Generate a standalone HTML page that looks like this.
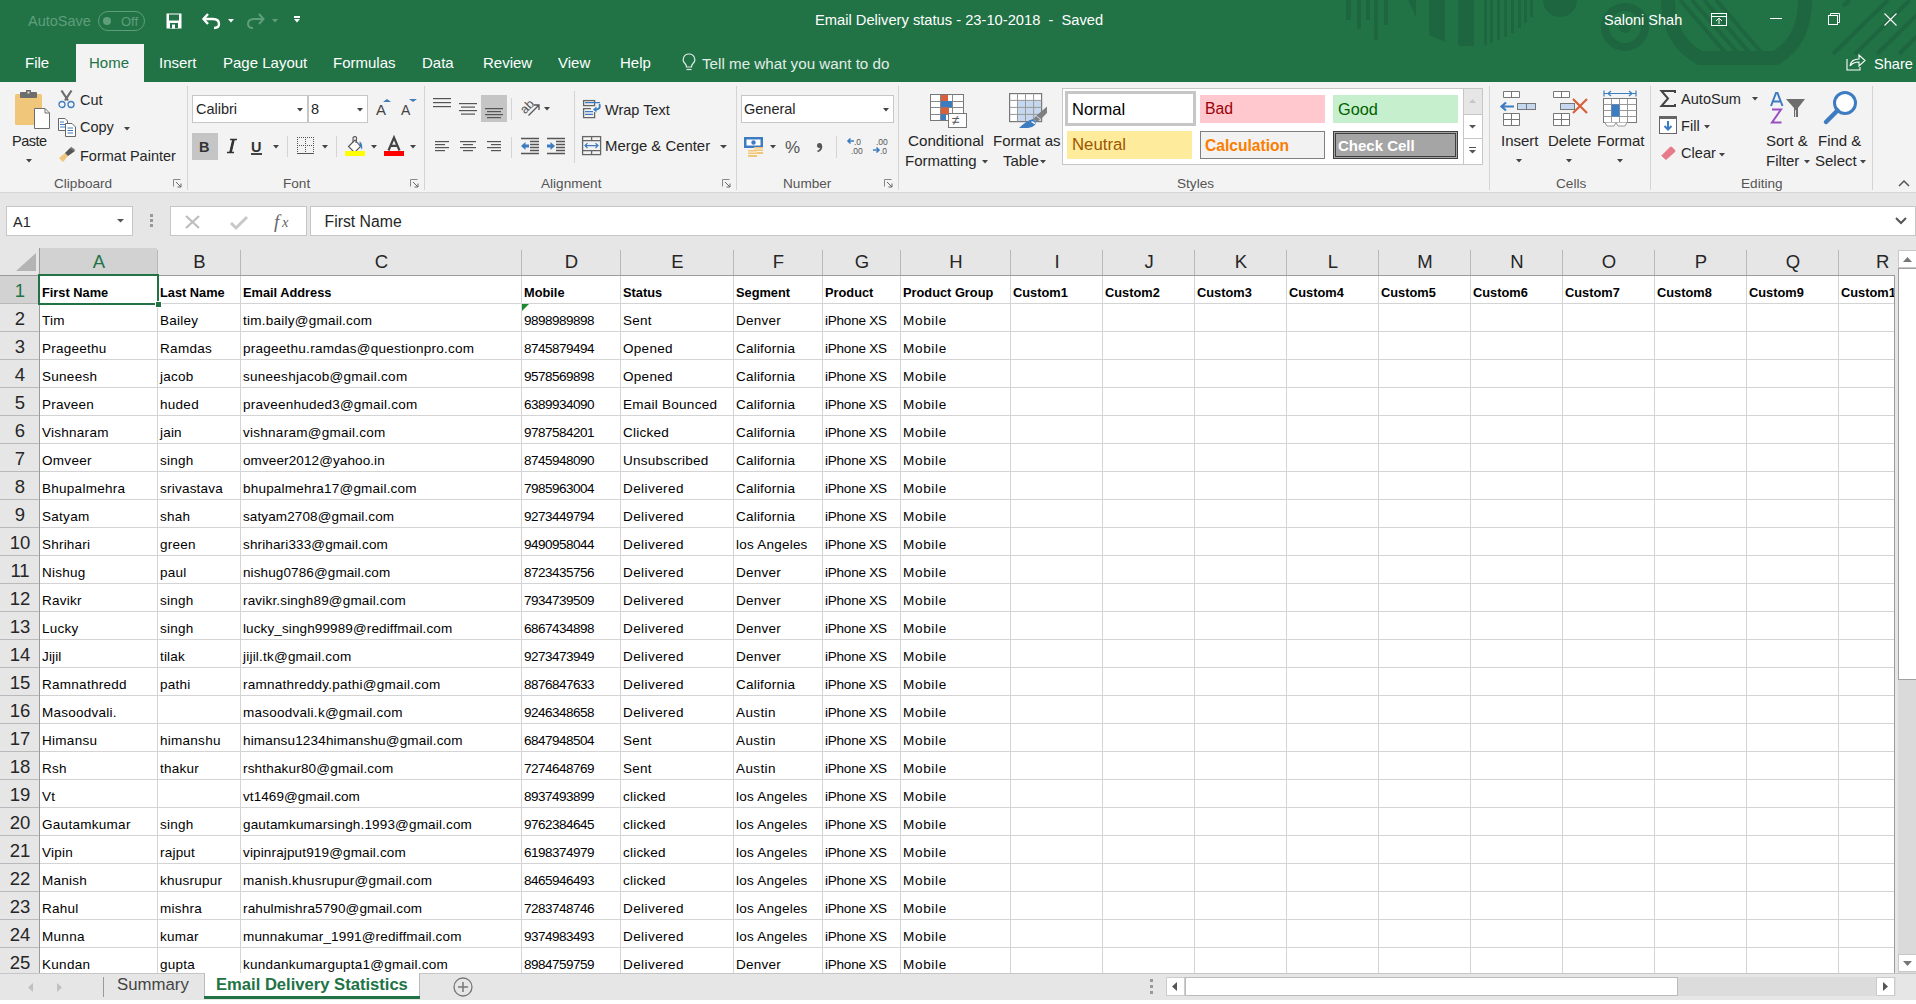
<!DOCTYPE html>
<html><head><meta charset="utf-8"><title>Excel</title>
<style>
html,body{margin:0;padding:0;}
body{width:1916px;height:1004px;position:relative;overflow:hidden;background:#fff;font-family:"Liberation Sans", sans-serif;}
.a{position:absolute;}
.t{position:absolute;white-space:pre;line-height:1;font-family:"Liberation Sans", sans-serif;}
svg.a{overflow:visible;}
</style></head><body>
<div class="a" style="left:0px;top:0px;width:1916px;height:82px;background:#217346"></div><svg class="a" style="left:0px;top:0px;overflow:hidden" width="1916" height="82" viewBox="0 0 1916 82"><g fill="#1e663f"><rect x="1346" y="0" width="5" height="20"/><rect x="1357" y="0" width="4" height="29"/><rect x="1366" y="0" width="4" height="20"/><rect x="1374" y="0" width="4" height="40"/><rect x="1384" y="0" width="4" height="25"/><path d="M1408 0H1416V17Z"/><path d="M1429 0H1445V42L1429 35Z"/><path d="M1458 0H1474V46H1465Q1458 46 1458 44Z"/><rect x="1484" y="0" width="3" height="45"/><rect x="1490" y="0" width="3" height="43"/><rect x="1497" y="0" width="3" height="40"/><rect x="1504" y="0" width="3" height="37"/><rect x="1511" y="0" width="3" height="33"/><rect x="1518" y="0" width="3" height="28"/><rect x="1524" y="0" width="3" height="23"/><rect x="1530" y="0" width="3" height="17"/><circle cx="1560" cy="0" r="17"/><circle cx="1625" cy="27" r="20" fill="none" stroke="#1e663f" stroke-width="8"/><circle cx="1625" cy="27" r="6"/><path d="M1668 0 Q1668 40 1700 58 L1776 58 Q1805 40 1805 0" fill="none" stroke="#1e663f" stroke-width="14"/><path d="M1680 0 L1730 58" stroke="#1e663f" stroke-width="4" fill="none"/><path d="M1692 0 L1742 58" stroke="#1e663f" stroke-width="4" fill="none"/><path d="M1704 0 L1754 58" stroke="#1e663f" stroke-width="4" fill="none"/><path d="M1716 0 L1766 58" stroke="#1e663f" stroke-width="4" fill="none"/><path d="M1888 0 L1833 54" stroke="#1e663f" stroke-width="4" fill="none"/><path d="M1910 0 L1855 54" stroke="#1e663f" stroke-width="4" fill="none"/><path d="M1932 0 L1877 54" stroke="#1e663f" stroke-width="4" fill="none"/><path d="M1954 0 L1899 54" stroke="#1e663f" stroke-width="4" fill="none"/><path d="M1843 6 L1850 0" stroke="#1e663f" stroke-width="4" fill="none"/></g></svg><div class="t" style="left:28px;top:14.2px;font-size:14.5px;color:#5f9e7a;font-weight:400;">AutoSave</div><div class="a" style="left:98px;top:11px;width:47px;height:20px;border:1px solid #5f9e7a;border-radius:10px;box-sizing:border-box"></div><div class="a" style="left:103px;top:17px;width:8px;height:8px;background:#5f9e7a;border-radius:50%"></div><div class="t" style="left:121px;top:15.0px;font-size:13px;color:#5f9e7a;font-weight:400;">Off</div><svg class="a" style="left:166px;top:13px;" width="16" height="16" viewBox="0 0 16 16"><path d="M0.5 0.5H15.5V15.5H0.5Z" fill="#fff"/><rect x="3" y="1.5" width="10" height="6" fill="#217346"/><rect x="4" y="10" width="8" height="5" fill="#217346"/><rect x="6" y="11.5" width="3" height="4" fill="#fff"/></svg><svg class="a" style="left:202px;top:13px;" width="19" height="16" viewBox="0 0 19 16"><path d="M2 6H11Q17 6 17 11Q17 15 12 15" fill="none" stroke="#fff" stroke-width="2.4"/><path d="M6 1L1.5 6L6 11" fill="none" stroke="#fff" stroke-width="2.4"/></svg><svg class="a" style="left:228px;top:19px;" width="6" height="4" viewBox="0 0 6 4"><path d="M0 0H6L3.0 3.5Z" fill="#fff"/></svg><svg class="a" style="left:246px;top:13px;" width="19" height="16" viewBox="0 0 19 16"><path d="M17 6H8Q2 6 2 11Q2 15 7 15" fill="none" stroke="#5f9e7a" stroke-width="2"/><path d="M13 1L17.5 6L13 11" fill="none" stroke="#5f9e7a" stroke-width="2"/></svg><svg class="a" style="left:272px;top:19px;" width="6" height="4" viewBox="0 0 6 4"><path d="M0 0H6L3.0 3.5Z" fill="#5f9e7a"/></svg><div class="a" style="left:294px;top:16px;width:6px;height:1.5px;background:#fff"></div><svg class="a" style="left:294px;top:19px;" width="6" height="4" viewBox="0 0 6 4"><path d="M0 0H6L3.0 3.5Z" fill="#fff"/></svg><div class="t" style="left:815px;top:12.6px;font-size:14.7px;color:#fff;font-weight:400;">Email Delivery status - 23-10-2018  -  Saved</div><div class="t" style="left:1604px;top:12.7px;font-size:14.5px;color:#fff;font-weight:400;">Saloni Shah</div><svg class="a" style="left:1711px;top:13px;" width="16" height="13" viewBox="0 0 16 13"><rect x="0.5" y="0.5" width="15" height="12" fill="none" stroke="#fff"/><path d="M0.5 3.5H15.5" stroke="#fff"/><path d="M8 11V5M5 8L8 5L11 8" fill="none" stroke="#fff"/></svg><div class="a" style="left:1770px;top:18px;width:12px;height:1px;background:#fff"></div><svg class="a" style="left:1828px;top:13px;" width="12" height="12" viewBox="0 0 12 12"><rect x="0.5" y="2.5" width="9" height="9" fill="none" stroke="#fff"/><path d="M2.5 2.5V0.5H11.5V9.5H9.5" fill="none" stroke="#fff"/></svg><svg class="a" style="left:1884px;top:13px;" width="13" height="13" viewBox="0 0 13 13"><path d="M0.5 0.5L12.5 12.5M12.5 0.5L0.5 12.5" stroke="#fff" stroke-width="1.1"/></svg><div class="a" style="left:76px;top:44px;width:68px;height:38px;background:#f3f3f3"></div><div class="t" style="left:25px;top:55.1px;font-size:15px;color:#fff;font-weight:400;">File</div><div class="t" style="left:89px;top:55.1px;font-size:15px;color:#217346;font-weight:400;">Home</div><div class="t" style="left:159px;top:55.1px;font-size:15px;color:#fff;font-weight:400;">Insert</div><div class="t" style="left:223px;top:55.1px;font-size:15px;color:#fff;font-weight:400;">Page Layout</div><div class="t" style="left:333px;top:55.1px;font-size:15px;color:#fff;font-weight:400;">Formulas</div><div class="t" style="left:422px;top:55.1px;font-size:15px;color:#fff;font-weight:400;">Data</div><div class="t" style="left:483px;top:55.1px;font-size:15px;color:#fff;font-weight:400;">Review</div><div class="t" style="left:558px;top:55.1px;font-size:15px;color:#fff;font-weight:400;">View</div><div class="t" style="left:620px;top:55.1px;font-size:15px;color:#fff;font-weight:400;">Help</div><svg class="a" style="left:682px;top:53px;" width="14" height="20" viewBox="0 0 14 20"><path d="M7 1A5.5 5.5 0 0 0 3 10.5Q4.5 12 4.5 14H9.5Q9.5 12 11 10.5A5.5 5.5 0 0 0 7 1Z" fill="none" stroke="#e0ece5" stroke-width="1.2"/><path d="M4.5 16.5H9.5" stroke="#e0ece5" stroke-width="1.2"/></svg><div class="t" style="left:702px;top:56.1px;font-size:15.2px;color:#e0ece5;font-weight:400;">Tell me what you want to do</div><svg class="a" style="left:1846px;top:53px;" width="20" height="18" viewBox="0 0 20 18"><path d="M1 6V17H14V14" fill="none" stroke="#fff" stroke-width="1.1"/><path d="M4 13Q5 6 13 6V2L19 7.5L13 13V9Q7 9 4 13Z" fill="none" stroke="#fff" stroke-width="1.1"/></svg><div class="t" style="left:1874px;top:56.6px;font-size:14.6px;color:#fff;font-weight:400;">Share</div><div class="a" style="left:0px;top:82px;width:1916px;height:111px;background:#f3f3f3"></div><div class="a" style="left:0px;top:192px;width:1916px;height:1px;background:#d6d6d6"></div><svg class="a" style="left:15px;top:90px;" width="35" height="39" viewBox="0 0 35 39"><rect x="0" y="4" width="27" height="31" rx="1.5" fill="#f0c67a"/><rect x="5" y="2" width="17" height="6" rx="1" fill="#6d6d6d"/><rect x="11" y="0" width="5" height="4" fill="#6d6d6d"/><rect x="12.5" y="1.5" width="2" height="2" fill="#ddd"/><path d="M19.5 18.5H30L34.5 23V38.5H19.5Z" fill="#fff" stroke="#6d6d6d"/><path d="M30 18.5V23H34.5" fill="none" stroke="#6d6d6d"/></svg><div class="t" style="left:12px;top:133.7px;font-size:14.5px;color:#262626;font-weight:400;letter-spacing:-0.5px">Paste</div><svg class="a" style="left:26px;top:159px;" width="6" height="4" viewBox="0 0 6 4"><path d="M0 0H6L3.0 3.5Z" fill="#444"/></svg><svg class="a" style="left:58px;top:90px;" width="17" height="19" viewBox="0 0 17 19"><path d="M3.5 0.5L10 10.5M13.5 0.5L7 10.5" stroke="#6d6d6d" stroke-width="2.2"/><circle cx="4" cy="14.5" r="3" fill="none" stroke="#3e7cc1" stroke-width="1.3"/><circle cx="13" cy="14.5" r="3" fill="none" stroke="#3e7cc1" stroke-width="1.3"/></svg><div class="t" style="left:80px;top:92.7px;font-size:14.5px;color:#262626;font-weight:400;">Cut</div><svg class="a" style="left:58px;top:118px;" width="18" height="19" viewBox="0 0 18 19"><path d="M0.5 0.5H7L9.5 3V12.5H0.5Z" fill="#fff" stroke="#666"/><path d="M2 4H6M2 6.5H7M2 9H7" stroke="#3e7cc1"/><path d="M7.5 5.5H14L17.5 9V18.5H7.5Z" fill="#fff" stroke="#666"/><path d="M9.5 10H15M9.5 12.5H15M9.5 15H15" stroke="#3e7cc1"/></svg><div class="t" style="left:80px;top:119.7px;font-size:14.5px;color:#262626;font-weight:400;">Copy</div><svg class="a" style="left:124px;top:127px;" width="6" height="4" viewBox="0 0 6 4"><path d="M0 0H6L3.0 3.5Z" fill="#444"/></svg><svg class="a" style="left:58px;top:147px;" width="18" height="16" viewBox="0 0 18 16"><path d="M1 11L7 6L10 9L5 15Z" fill="#f0c67a"/><path d="M7 6L12 1L17 4L10 9Z" fill="#555"/><path d="M12.5 0.5L16.5 3.5" stroke="#777" stroke-width="2"/></svg><div class="t" style="left:80px;top:148.7px;font-size:14.5px;color:#262626;font-weight:400;">Format Painter</div><div class="t" style="left:54px;top:176.5px;font-size:13.6px;color:#555;font-weight:400;">Clipboard</div><svg class="a" style="left:173px;top:179px;" width="9" height="9" viewBox="0 0 9 9"><path d="M0.5 7.5V0.5H7.5" fill="none" stroke="#888"/><path d="M3 3L8 8M8 4.5V8H4.5" fill="none" stroke="#666"/></svg><div class="a" style="left:187px;top:86px;width:1px;height:104px;background:#d4d4d4"></div><div class="a" style="left:192px;top:95px;width:116px;height:28px;background:#fff;border:1px solid #c6c6c6;box-sizing:border-box"></div><div class="a" style="left:308px;top:95px;width:60px;height:28px;background:#fff;border:1px solid #c6c6c6;box-sizing:border-box"></div><div class="t" style="left:196px;top:102.2px;font-size:14.5px;color:#262626;font-weight:400;">Calibri</div><svg class="a" style="left:297px;top:108px;" width="6" height="4" viewBox="0 0 6 4"><path d="M0 0H6L3.0 3.5Z" fill="#444"/></svg><div class="t" style="left:311px;top:102.2px;font-size:14.5px;color:#262626;font-weight:400;">8</div><svg class="a" style="left:357px;top:108px;" width="6" height="4" viewBox="0 0 6 4"><path d="M0 0H6L3.0 3.5Z" fill="#444"/></svg><div class="t" style="left:376px;top:102.3px;font-size:15px;color:#444;font-weight:400;">A</div><svg class="a" style="left:383px;top:99px;" width="8" height="3" viewBox="0 0 8 3"><path d="M0 3L4 0L8 3Z" fill="#3e7cc1"/></svg><div class="t" style="left:401px;top:103.1px;font-size:14px;color:#444;font-weight:400;">A</div><svg class="a" style="left:409px;top:99px;" width="8" height="3" viewBox="0 0 8 3"><path d="M0 0H8L4 3Z" fill="#3e7cc1"/></svg><div class="a" style="left:192px;top:133px;width:26px;height:27px;background:#c5c5c5"></div><div class="t" style="left:199px;top:139.7px;font-size:14.5px;color:#333;font-weight:700;">B</div><svg class="a" style="left:226px;top:139px;" width="12" height="14" viewBox="0 0 12 14"><path d="M4 0.5H11M1 13.5H8M7.5 0.5L4.5 13.5" stroke="#333" stroke-width="1.6" fill="none"/><path d="M7.5 0.5L4.5 13.5" stroke="#333" stroke-width="2.6"/></svg><div class="t" style="left:251px;top:139.7px;font-size:14.5px;color:#333;font-weight:700;">U</div><div class="a" style="left:251px;top:153px;width:11px;height:1.5px;background:#444"></div><svg class="a" style="left:273px;top:145px;" width="6" height="4" viewBox="0 0 6 4"><path d="M0 0H6L3.0 3.5Z" fill="#444"/></svg><div class="a" style="left:287px;top:136px;width:1px;height:21px;background:#d4d4d4"></div><svg class="a" style="left:297px;top:137px;" width="18" height="18" viewBox="0 0 18 18"><g fill="#555"><rect x="0" y="0" width="1" height="1"/><rect x="0" y="8" width="1" height="1"/><rect x="0" y="0" width="1" height="1"/><rect x="8" y="0" width="1" height="1"/><rect x="16" y="0" width="1" height="1"/><rect x="2" y="0" width="1" height="1"/><rect x="2" y="8" width="1" height="1"/><rect x="0" y="2" width="1" height="1"/><rect x="8" y="2" width="1" height="1"/><rect x="16" y="2" width="1" height="1"/><rect x="4" y="0" width="1" height="1"/><rect x="4" y="8" width="1" height="1"/><rect x="0" y="4" width="1" height="1"/><rect x="8" y="4" width="1" height="1"/><rect x="16" y="4" width="1" height="1"/><rect x="6" y="0" width="1" height="1"/><rect x="6" y="8" width="1" height="1"/><rect x="0" y="6" width="1" height="1"/><rect x="8" y="6" width="1" height="1"/><rect x="16" y="6" width="1" height="1"/><rect x="8" y="0" width="1" height="1"/><rect x="8" y="8" width="1" height="1"/><rect x="0" y="8" width="1" height="1"/><rect x="8" y="8" width="1" height="1"/><rect x="16" y="8" width="1" height="1"/><rect x="10" y="0" width="1" height="1"/><rect x="10" y="8" width="1" height="1"/><rect x="0" y="10" width="1" height="1"/><rect x="8" y="10" width="1" height="1"/><rect x="16" y="10" width="1" height="1"/><rect x="12" y="0" width="1" height="1"/><rect x="12" y="8" width="1" height="1"/><rect x="0" y="12" width="1" height="1"/><rect x="8" y="12" width="1" height="1"/><rect x="16" y="12" width="1" height="1"/><rect x="14" y="0" width="1" height="1"/><rect x="14" y="8" width="1" height="1"/><rect x="0" y="14" width="1" height="1"/><rect x="8" y="14" width="1" height="1"/><rect x="16" y="14" width="1" height="1"/><rect x="16" y="0" width="1" height="1"/><rect x="16" y="8" width="1" height="1"/></g><rect x="0" y="16" width="17" height="1" fill="#555"/></svg><svg class="a" style="left:322px;top:145px;" width="6" height="4" viewBox="0 0 6 4"><path d="M0 0H6L3.0 3.5Z" fill="#444"/></svg><div class="a" style="left:336px;top:136px;width:1px;height:21px;background:#d4d4d4"></div><svg class="a" style="left:345px;top:136px;" width="21" height="21" viewBox="0 0 21 21"><path d="M3.5 10.5L10 4L15.5 10.5L9.5 16.5Z" fill="#fff" stroke="#555" stroke-width="1.1"/><path d="M8 6.5V2.2Q8 0.6 10 0.6Q12 0.6 11.5 3L11 7" fill="none" stroke="#555" stroke-width="1.1"/><path d="M14.5 5.5Q18 6.5 17 14Q15.5 11 14.5 9Z" fill="#3e7cc1"/><rect x="0" y="15" width="20" height="5" fill="#ffff00"/></svg><svg class="a" style="left:371px;top:145px;" width="6" height="4" viewBox="0 0 6 4"><path d="M0 0H6L3.0 3.5Z" fill="#444"/></svg><svg class="a" style="left:384px;top:136px;" width="20" height="15" viewBox="0 0 20 15"><path d="M4.5 14.5L10 1.5L15.5 14.5M6.8 9.8H13.2" fill="none" stroke="#444" stroke-width="2.2"/></svg><div class="a" style="left:384px;top:151px;width:20px;height:5px;background:#ff0000"></div><svg class="a" style="left:410px;top:145px;" width="6" height="4" viewBox="0 0 6 4"><path d="M0 0H6L3.0 3.5Z" fill="#444"/></svg><div class="t" style="left:283px;top:176.5px;font-size:13.6px;color:#555;font-weight:400;">Font</div><svg class="a" style="left:410px;top:179px;" width="9" height="9" viewBox="0 0 9 9"><path d="M0.5 7.5V0.5H7.5" fill="none" stroke="#888"/><path d="M3 3L8 8M8 4.5V8H4.5" fill="none" stroke="#666"/></svg><div class="a" style="left:424px;top:86px;width:1px;height:104px;background:#d4d4d4"></div><div class="a" style="left:481px;top:95px;width:26px;height:27px;background:#c5c5c5"></div><svg class="a" style="left:0px;top:0px;" width="1916" height="200" viewBox="0 0 1916 200"><rect x="433" y="98" width="18" height="1.2" fill="#555"/><rect x="433" y="102" width="18" height="1.2" fill="#555"/><rect x="433" y="106" width="18" height="1.2" fill="#555"/><rect x="459" y="103" width="18" height="1.2" fill="#555"/><rect x="461" y="106.5" width="14" height="1.2" fill="#555"/><rect x="459" y="110" width="18" height="1.2" fill="#555"/><rect x="461" y="113.5" width="14" height="1.2" fill="#555"/><rect x="485" y="108" width="18" height="1.2" fill="#555"/><rect x="487" y="111" width="14" height="1.2" fill="#555"/><rect x="485" y="114" width="18" height="1.2" fill="#555"/><rect x="487" y="117" width="14" height="1.2" fill="#555"/><rect x="435" y="141" width="14" height="1.2" fill="#555"/><rect x="435" y="144" width="10" height="1.2" fill="#555"/><rect x="435" y="147" width="14" height="1.2" fill="#555"/><rect x="435" y="150" width="10" height="1.2" fill="#555"/><rect x="460" y="141" width="16" height="1.2" fill="#555"/><rect x="463" y="144" width="10" height="1.2" fill="#555"/><rect x="460" y="147" width="16" height="1.2" fill="#555"/><rect x="463" y="150" width="10" height="1.2" fill="#555"/><rect x="487" y="141" width="14" height="1.2" fill="#555"/><rect x="491" y="144" width="10" height="1.2" fill="#555"/><rect x="487" y="147" width="14" height="1.2" fill="#555"/><rect x="491" y="150" width="10" height="1.2" fill="#555"/></svg><div class="a" style="left:511px;top:98px;width:1px;height:22px;background:#d4d4d4"></div><div class="a" style="left:511px;top:137px;width:1px;height:21px;background:#d4d4d4"></div><svg class="a" style="left:544px;top:107px;" width="6" height="4" viewBox="0 0 6 4"><path d="M0 0H6L3.0 3.5Z" fill="#444"/></svg><div class="a" style="left:574px;top:91px;width:1px;height:72px;background:#d4d4d4"></div><svg class="a" style="left:0px;top:0px;" width="1916" height="200" viewBox="0 0 1916 200"><g fill="none" stroke="#555" stroke-width="1.4"><path d="M521 138.5H539M530 141.5H539M530 144.5H539M530 147.5H539M530 150.5H539M521 153.5H539"/><path d="M547 138.5H565M556 141.5H565M556 144.5H565M556 147.5H565M556 150.5H565M547 153.5H565"/></g><path d="M521 146L525.5 142V144.6H529V147.4H525.5V150Z" fill="#3e7cc1"/><path d="M555 146L550.5 142V144.6H547V147.4H550.5V150Z" fill="#3e7cc1"/><text x="0" y="0" font-size="12.5" fill="#555" font-family="Liberation Sans" transform="translate(525 114.5) rotate(-45)" font-size="14">ab</text><path d="M528.5 115.5L539 105M534 105H539V110" fill="none" stroke="#555" stroke-width="1.3"/><g fill="none" stroke="#666" stroke-width="1.3"><rect x="583.6" y="100.6" width="11" height="5"/><path d="M591 108.6H583.6V117.6H594.6V112"/></g><path d="M585 102.6H600M585 111.6H593M585 114.4H593" stroke="#3e7cc1" stroke-width="1.1"/><path d="M599.5 104Q601 109.5 595.5 109.5" fill="none" stroke="#3e7cc1" stroke-width="1.8"/><path d="M593 109.5L596.5 106.5V112.5Z" fill="#3e7cc1"/><g fill="none" stroke="#666" stroke-width="1.3"><rect x="582.6" y="136.6" width="18" height="18"/><path d="M582.6 140.6H600.6M582.6 150.6H600.6M591.6 136.6V140.6M591.6 150.6V154.6"/></g><path d="M585 145.6H598M587.5 143.2L585 145.6L587.5 148M595.5 143.2L598 145.6L595.5 148" fill="none" stroke="#3e7cc1" stroke-width="1.2"/></svg><div class="t" style="left:605px;top:102.7px;font-size:14.5px;color:#262626;font-weight:400;">Wrap Text</div><div class="t" style="left:605px;top:139.4px;font-size:14.9px;color:#262626;font-weight:400;">Merge &amp; Center</div><svg class="a" style="left:720px;top:145px;" width="7" height="4" viewBox="0 0 7 4"><path d="M0 0H7L3.5 3.5Z" fill="#444"/></svg><div class="t" style="left:541px;top:176.5px;font-size:13.6px;color:#555;font-weight:400;">Alignment</div><svg class="a" style="left:722px;top:179px;" width="9" height="9" viewBox="0 0 9 9"><path d="M0.5 7.5V0.5H7.5" fill="none" stroke="#888"/><path d="M3 3L8 8M8 4.5V8H4.5" fill="none" stroke="#666"/></svg><div class="a" style="left:736px;top:86px;width:1px;height:104px;background:#d4d4d4"></div><div class="a" style="left:741px;top:95px;width:153px;height:28px;background:#fff;border:1px solid #c6c6c6;box-sizing:border-box"></div><div class="t" style="left:744px;top:102.2px;font-size:14.5px;color:#262626;font-weight:400;">General</div><svg class="a" style="left:883px;top:108px;" width="6" height="4" viewBox="0 0 6 4"><path d="M0 0H6L3.0 3.5Z" fill="#444"/></svg><svg class="a" style="left:744px;top:137px;" width="20" height="20" viewBox="0 0 20 20"><rect x="0" y="0" width="19" height="11" fill="#3e7cc1"/><rect x="2.5" y="2.5" width="14" height="6" fill="#fff"/><circle cx="9.5" cy="5.5" r="2.2" fill="#3e7cc1"/><rect x="10" y="10" width="9" height="7" fill="#f0c67a"/><path d="M10 12H19M10 14.5H19" stroke="#fff" stroke-width="0.8"/><rect x="4" y="13" width="9" height="7" fill="#f0c67a"/><path d="M4 15H13M4 17.5H13" stroke="#fff" stroke-width="0.8"/></svg><svg class="a" style="left:770px;top:145px;" width="6" height="4" viewBox="0 0 6 4"><path d="M0 0H6L3.0 3.5Z" fill="#444"/></svg><div class="t" style="left:785px;top:138.6px;font-size:17px;color:#555;font-weight:400;">%</div><svg class="a" style="left:815px;top:142px;" width="8" height="10" viewBox="0 0 8 10"><circle cx="4.5" cy="3.5" r="2.5" fill="#555"/><path d="M6.5 4Q6.5 8 2.5 9.5" fill="none" stroke="#555" stroke-width="1.8"/></svg><div class="a" style="left:836px;top:136px;width:1px;height:22px;background:#d4d4d4"></div><svg class="a" style="left:847px;top:137px;" width="18" height="20" viewBox="0 0 18 20"><text x="7" y="8" font-size="8.5" fill="#555" font-family="Liberation Sans">.0</text><text x="4" y="17" font-size="8.5" fill="#555" font-family="Liberation Sans">.00</text><path d="M7 4H1M3.5 1.5L1 4L3.5 6.5" fill="none" stroke="#3e7cc1" stroke-width="1.6"/></svg><svg class="a" style="left:872px;top:137px;" width="18" height="20" viewBox="0 0 18 20"><text x="4" y="8" font-size="8.5" fill="#555" font-family="Liberation Sans">.00</text><text x="8" y="17" font-size="8.5" fill="#555" font-family="Liberation Sans">.0</text><path d="M1 13H7M4.5 10.5L7 13L4.5 15.5" fill="none" stroke="#3e7cc1" stroke-width="1.6"/></svg><div class="t" style="left:783px;top:176.5px;font-size:13.6px;color:#555;font-weight:400;">Number</div><svg class="a" style="left:884px;top:179px;" width="9" height="9" viewBox="0 0 9 9"><path d="M0.5 7.5V0.5H7.5" fill="none" stroke="#888"/><path d="M3 3L8 8M8 4.5V8H4.5" fill="none" stroke="#666"/></svg><div class="a" style="left:898px;top:86px;width:1px;height:104px;background:#d4d4d4"></div><svg class="a" style="left:930px;top:94px;" width="38" height="35" viewBox="0 0 38 35"><rect x="0.5" y="0.5" width="33" height="26" fill="#fff" stroke="#777"/><path d="M0.5 7.5H33.5" stroke="#888"/><path d="M0.5 13.5H33.5" stroke="#888"/><path d="M0.5 20.5H33.5" stroke="#888"/><path d="M10.5 0.5V26.5" stroke="#888"/><path d="M22.5 0.5V26.5" stroke="#888"/><rect x="11" y="1" width="7" height="6" fill="#d9603b"/><rect x="11" y="7" width="11" height="6.5" fill="#3e7cc1"/><rect x="11" y="13.5" width="8" height="6.5" fill="#d9603b"/><rect x="11" y="20" width="5" height="6" fill="#3e7cc1"/><rect x="18.5" y="19.5" width="18" height="14" fill="#fff" stroke="#777"/><text x="22" y="31" font-size="14" fill="#555" font-family="Liberation Sans">≠</text></svg><div class="t" style="left:908px;top:133.1px;font-size:15.2px;color:#262626;font-weight:400;">Conditional</div><div class="t" style="left:905px;top:152.8px;font-size:15px;color:#262626;font-weight:400;">Formatting</div><svg class="a" style="left:982px;top:160px;" width="6" height="4" viewBox="0 0 6 4"><path d="M0 0H6L3.0 3.5Z" fill="#444"/></svg><svg class="a" style="left:1009px;top:93px;" width="40" height="37" viewBox="0 0 40 37"><rect x="0.6" y="0.6" width="32" height="28" fill="#fff"/><rect x="8.5" y="7.4" width="24" height="21" fill="#c5d8ef"/><rect x="0.6" y="0.6" width="32" height="28" fill="none" stroke="#777" stroke-width="1.2"/><path d="M0.6 7.4H32.6" stroke="#999"/><path d="M0.6 14.4H32.6" stroke="#999"/><path d="M0.6 21.4H32.6" stroke="#999"/><path d="M8.5 0.6V28.6" stroke="#999"/><path d="M16.5 0.6V28.6" stroke="#999"/><path d="M24.6 0.6V28.6" stroke="#999"/><path d="M38 13.5V20L32 26L27.5 22.5Z" fill="#808080"/><path d="M27 23L31 26.5L28 29L24.5 26Z" fill="#808080"/><path d="M24 26Q28 29 26 32Q23 35 19 35H10Q17 28 24 26Z" fill="#3e7cc1"/><path d="M22.5 29Q25 28.5 25.5 31" fill="none" stroke="#fff" stroke-width="1.5"/></svg><div class="t" style="left:993px;top:133.3px;font-size:15px;color:#262626;font-weight:400;">Format as</div><div class="t" style="left:1003px;top:152.8px;font-size:15px;color:#262626;font-weight:400;">Table</div><svg class="a" style="left:1040px;top:160px;" width="6" height="4" viewBox="0 0 6 4"><path d="M0 0H6L3.0 3.5Z" fill="#444"/></svg><div class="a" style="left:1062px;top:88px;width:421px;height:77px;background:#fff;border:1px solid #c6c6c6;box-sizing:border-box"></div><div class="a" style="left:1065px;top:91px;width:131px;height:35px;background:#fff;border:3px solid #c6c6c6;box-sizing:border-box"></div><div class="t" style="left:1072px;top:100.8px;font-size:16.5px;color:#000;font-weight:400;">Normal</div><div class="a" style="left:1200px;top:95px;width:125px;height:28px;background:#ffc7ce"></div><div class="t" style="left:1205px;top:101.4px;font-size:15.8px;color:#9c0006;font-weight:400;">Bad</div><div class="a" style="left:1333px;top:95px;width:125px;height:28px;background:#c6efce"></div><div class="t" style="left:1338px;top:101.0px;font-size:16.3px;color:#006100;font-weight:400;">Good</div><div class="a" style="left:1067px;top:131px;width:125px;height:28px;background:#ffeb9c"></div><div class="t" style="left:1072px;top:136.6px;font-size:16.8px;color:#9c5700;font-weight:400;">Neutral</div><div class="a" style="left:1200px;top:131px;width:125px;height:28px;background:#f2f2f2;border:1px solid #7f7f7f;box-sizing:border-box"></div><div class="t" style="left:1205px;top:137.6px;font-size:15.6px;color:#fa7d00;font-weight:700;">Calculation</div><div class="a" style="left:1333px;top:131px;width:125px;height:28px;background:#a5a5a5;border:3px double #3f3f3f;box-sizing:border-box"></div><div class="t" style="left:1338px;top:138.1px;font-size:15px;color:#fff;font-weight:700;">Check Cell</div><div class="a" style="left:1463px;top:88px;width:20px;height:77px;background:#fff;border:1px solid #c6c6c6;box-sizing:border-box"></div><div class="a" style="left:1464px;top:89px;width:18px;height:25px;background:#e6e6e6"></div><div class="a" style="left:1463px;top:114px;width:20px;height:1px;background:#c6c6c6"></div><div class="a" style="left:1463px;top:138px;width:20px;height:1px;background:#c6c6c6"></div><svg class="a" style="left:1469px;top:99px;" width="7" height="4" viewBox="0 0 7 4"><path d="M0 4L3.5 0L7 4Z" fill="#c6c6c6"/></svg><svg class="a" style="left:1469px;top:125px;" width="7" height="4" viewBox="0 0 7 4"><path d="M0 0H7L3.5 3.5Z" fill="#555"/></svg><div class="a" style="left:1469px;top:147px;width:7px;height:1px;background:#555"></div><svg class="a" style="left:1469px;top:150px;" width="7" height="4" viewBox="0 0 7 4"><path d="M0 0H7L3.5 3.5Z" fill="#555"/></svg><div class="t" style="left:1177px;top:176.5px;font-size:13.6px;color:#555;font-weight:400;">Styles</div><div class="a" style="left:1489px;top:86px;width:1px;height:104px;background:#d4d4d4"></div><svg class="a" style="left:1500px;top:91px;" width="36" height="35" viewBox="0 0 36 35"><path d="M3.5 0.5H19.5V6.5H3.5ZM11.5 0.5V6.5M3.5 22.5H19.5V34.5H3.5ZM3.5 28.5H19.5M11.5 22.5V34.5" fill="#fff" stroke="#777"/><rect x="17.5" y="12.5" width="18" height="6" fill="#c5d8ef" stroke="#777"/><path d="M26.5 12.5V18.5" stroke="#777"/><path d="M14 15.5H2M6 11.5L1.5 15.5L6 19.5" fill="none" stroke="#3e7cc1" stroke-width="2.2"/></svg><div class="t" style="left:1501px;top:133.3px;font-size:15px;color:#262626;font-weight:400;">Insert</div><svg class="a" style="left:1516px;top:159px;" width="6" height="4" viewBox="0 0 6 4"><path d="M0 0H6L3.0 3.5Z" fill="#444"/></svg><svg class="a" style="left:1553px;top:91px;" width="36" height="35" viewBox="0 0 36 35"><path d="M0.5 0.5H16.5V6.5H0.5ZM8.5 0.5V6.5M0.5 22.5H16.5V34.5H0.5ZM0.5 28.5H16.5M8.5 22.5V34.5" fill="#fff" stroke="#777"/><rect x="7.5" y="12.5" width="14" height="6" fill="#c5d8ef" stroke="#777"/><path d="M20 8L34 22M34 8L20 22" stroke="#d9603b" stroke-width="2.2"/></svg><div class="t" style="left:1548px;top:133.3px;font-size:15px;color:#262626;font-weight:400;">Delete</div><svg class="a" style="left:1566px;top:159px;" width="6" height="4" viewBox="0 0 6 4"><path d="M0 0H6L3.0 3.5Z" fill="#444"/></svg><svg class="a" style="left:1603px;top:90px;" width="35" height="37" viewBox="0 0 35 37"><path d="M1 3.5H33M1 0.5V6.5M33 0.5V6.5M5 3.5L8 1M5 3.5L8 6M29 3.5L26 1M29 3.5L26 6" fill="none" stroke="#3e7cc1" stroke-width="1.2"/><rect x="0.5" y="8.5" width="33" height="24" fill="#fff" stroke="#777"/><path d="M0.5 14.5H33.5M0.5 20.5H33.5M0.5 26.5H33.5M8.5 8.5V32.5M16.5 8.5V32.5M24.5 8.5V32.5" stroke="#999"/><rect x="8.5" y="14.5" width="8" height="12" fill="#3e7cc1"/><path d="M2 32.5L4 36H11L13 32.5M13 32.5L15 36H22L24 32.5" fill="#fff" stroke="#999"/></svg><div class="t" style="left:1597px;top:133.3px;font-size:15px;color:#262626;font-weight:400;">Format</div><svg class="a" style="left:1617px;top:159px;" width="6" height="4" viewBox="0 0 6 4"><path d="M0 0H6L3.0 3.5Z" fill="#444"/></svg><div class="t" style="left:1556px;top:176.5px;font-size:13.6px;color:#555;font-weight:400;">Cells</div><div class="a" style="left:1650px;top:86px;width:1px;height:104px;background:#d4d4d4"></div><svg class="a" style="left:1660px;top:90px;" width="16" height="17" viewBox="0 0 16 17"><path d="M15 3V1H1.5L8 8.5L1.5 16H15V14" fill="none" stroke="#444" stroke-width="2" stroke-linejoin="miter"/></svg><div class="t" style="left:1681px;top:92.1px;font-size:14.6px;color:#262626;font-weight:400;">AutoSum</div><svg class="a" style="left:1752px;top:97px;" width="6" height="4" viewBox="0 0 6 4"><path d="M0 0H6L3.0 3.5Z" fill="#444"/></svg><svg class="a" style="left:1659px;top:116px;" width="18" height="18" viewBox="0 0 18 18"><rect x="0.5" y="0.5" width="17" height="17" fill="#fff" stroke="#666"/><path d="M0.5 2H17.5" stroke="#666" stroke-width="2"/><path d="M9 5V13M5.5 10L9 13.5L12.5 10" fill="none" stroke="#3e7cc1" stroke-width="2"/></svg><div class="t" style="left:1681px;top:118.6px;font-size:14.6px;color:#262626;font-weight:400;">Fill</div><svg class="a" style="left:1704px;top:125px;" width="6" height="4" viewBox="0 0 6 4"><path d="M0 0H6L3.0 3.5Z" fill="#444"/></svg><svg class="a" style="left:1660px;top:144px;" width="17" height="17" viewBox="0 0 17 17"><path d="M1 12L10 3Q11 2 12 3L15 6Q16 7 15 8L6 16Z" fill="#e87b8a"/><path d="M1 12L5 16" stroke="#fff" stroke-width="1"/></svg><div class="t" style="left:1681px;top:145.6px;font-size:14.6px;color:#262626;font-weight:400;">Clear</div><svg class="a" style="left:1719px;top:153px;" width="6" height="4" viewBox="0 0 6 4"><path d="M0 0H6L3.0 3.5Z" fill="#444"/></svg><svg class="a" style="left:1770px;top:92px;" width="38" height="34" viewBox="0 0 38 34"><path d="M1 14L6 1H7.5L12.5 14M3 9.5H10.5" fill="none" stroke="#3e7cc1" stroke-width="2"/><path d="M2 17.5H11L2 30.5H11.5" fill="none" stroke="#9a4fc4" stroke-width="2"/><path d="M16 5H35L28 14V23H24V14Z" fill="#6d6d6d" transform="translate(0,2)"/><path d="M25.5 16V23" stroke="#ddd" stroke-width="1" transform="translate(0,2)"/></svg><div class="t" style="left:1766px;top:133.3px;font-size:15px;color:#262626;font-weight:400;">Sort &amp;</div><div class="t" style="left:1766px;top:153.3px;font-size:15px;color:#262626;font-weight:400;">Filter</div><svg class="a" style="left:1804px;top:160px;" width="6" height="4" viewBox="0 0 6 4"><path d="M0 0H6L3.0 3.5Z" fill="#444"/></svg><svg class="a" style="left:1823px;top:90px;" width="36" height="36" viewBox="0 0 36 36"><circle cx="22" cy="13" r="10.5" fill="#fff" stroke="#3e7cc1" stroke-width="3"/><path d="M14.5 20.5L3 32" stroke="#3e7cc1" stroke-width="4.5" stroke-linecap="round"/></svg><div class="t" style="left:1818px;top:133.3px;font-size:15px;color:#262626;font-weight:400;">Find &amp;</div><div class="t" style="left:1815px;top:153.3px;font-size:15px;color:#262626;font-weight:400;">Select</div><svg class="a" style="left:1860px;top:160px;" width="6" height="4" viewBox="0 0 6 4"><path d="M0 0H6L3.0 3.5Z" fill="#444"/></svg><div class="t" style="left:1741px;top:176.5px;font-size:13.6px;color:#555;font-weight:400;">Editing</div><div class="a" style="left:1872px;top:86px;width:1px;height:104px;background:#d4d4d4"></div><svg class="a" style="left:1898px;top:180px;" width="12" height="7" viewBox="0 0 12 7"><path d="M1 6L6 1L11 6" fill="none" stroke="#555" stroke-width="1.5"/></svg><div class="a" style="left:0px;top:193px;width:1916px;height:55px;background:#e6e6e6"></div><div class="a" style="left:6px;top:206px;width:127px;height:30px;background:#fff;border:1px solid #c6c6c6;box-sizing:border-box"></div><div class="t" style="left:13px;top:215.0px;font-size:14.5px;color:#262626;font-weight:400;">A1</div><svg class="a" style="left:117px;top:219px;" width="7" height="4" viewBox="0 0 7 4"><path d="M0 0H7L3.5 3.5Z" fill="#555"/></svg><div class="a" style="left:150px;top:214px;width:3px;height:3px;background:#999"></div><div class="a" style="left:150px;top:219px;width:3px;height:3px;background:#999"></div><div class="a" style="left:150px;top:224px;width:3px;height:3px;background:#999"></div><div class="a" style="left:170px;top:206px;width:137px;height:30px;background:#fff;border:1px solid #c6c6c6;box-sizing:border-box"></div><svg class="a" style="left:185px;top:215px;" width="15" height="14" viewBox="0 0 15 14"><path d="M1 1L14 13M14 1L1 13" stroke="#bdbdbd" stroke-width="2.2"/></svg><svg class="a" style="left:230px;top:215px;" width="18" height="14" viewBox="0 0 18 14"><path d="M1 8L6 13L17 2" fill="none" stroke="#c8c8c8" stroke-width="3"/></svg><div class="t" style="left:274px;top:211.9px;font-size:19px;color:#666;font-weight:400;font-family:'Liberation Serif',serif;font-style:italic">f</div><div class="t" style="left:282px;top:214.7px;font-size:14.5px;color:#666;font-weight:400;font-family:'Liberation Serif',serif;font-style:italic">x</div><div class="a" style="left:310px;top:206px;width:1606px;height:30px;background:#fff;border:1px solid #c6c6c6;box-sizing:border-box"></div><div class="t" style="left:324.5px;top:214.1px;font-size:15.8px;color:#262626;font-weight:400;">First Name</div><svg class="a" style="left:1895px;top:217px;" width="12" height="8" viewBox="0 0 12 8"><path d="M1 1L6 6L11 1" fill="none" stroke="#555" stroke-width="2"/></svg><div class="a" style="left:0px;top:248px;width:1916px;height:725px;background:#fff"></div><div class="a" style="left:0px;top:248px;width:1895px;height:28px;background:#e6e6e6"></div><div class="a" style="left:39px;top:248px;width:118px;height:27px;background:#d2d2d2"></div><svg class="a" style="left:16px;top:253px;" width="21" height="19" viewBox="0 0 21 19"><path d="M20 0V18H0Z" fill="#b4b4b4"/></svg><div class="a" style="left:0px;top:276px;width:39px;height:697px;background:#e6e6e6"></div><div class="a" style="left:0px;top:276px;width:39px;height:27px;background:#d2d2d2"></div><svg class="a" style="left:0px;top:0px;" width="1916" height="1004" viewBox="0 0 1916 1004"><rect x="39" y="303" width="1855" height="1" fill="#d4d4d4"/><rect x="0" y="303" width="39" height="1" fill="#b9b9b9"/><rect x="39" y="331" width="1855" height="1" fill="#d4d4d4"/><rect x="0" y="331" width="39" height="1" fill="#b9b9b9"/><rect x="39" y="359" width="1855" height="1" fill="#d4d4d4"/><rect x="0" y="359" width="39" height="1" fill="#b9b9b9"/><rect x="39" y="387" width="1855" height="1" fill="#d4d4d4"/><rect x="0" y="387" width="39" height="1" fill="#b9b9b9"/><rect x="39" y="415" width="1855" height="1" fill="#d4d4d4"/><rect x="0" y="415" width="39" height="1" fill="#b9b9b9"/><rect x="39" y="443" width="1855" height="1" fill="#d4d4d4"/><rect x="0" y="443" width="39" height="1" fill="#b9b9b9"/><rect x="39" y="471" width="1855" height="1" fill="#d4d4d4"/><rect x="0" y="471" width="39" height="1" fill="#b9b9b9"/><rect x="39" y="499" width="1855" height="1" fill="#d4d4d4"/><rect x="0" y="499" width="39" height="1" fill="#b9b9b9"/><rect x="39" y="527" width="1855" height="1" fill="#d4d4d4"/><rect x="0" y="527" width="39" height="1" fill="#b9b9b9"/><rect x="39" y="555" width="1855" height="1" fill="#d4d4d4"/><rect x="0" y="555" width="39" height="1" fill="#b9b9b9"/><rect x="39" y="583" width="1855" height="1" fill="#d4d4d4"/><rect x="0" y="583" width="39" height="1" fill="#b9b9b9"/><rect x="39" y="611" width="1855" height="1" fill="#d4d4d4"/><rect x="0" y="611" width="39" height="1" fill="#b9b9b9"/><rect x="39" y="639" width="1855" height="1" fill="#d4d4d4"/><rect x="0" y="639" width="39" height="1" fill="#b9b9b9"/><rect x="39" y="667" width="1855" height="1" fill="#d4d4d4"/><rect x="0" y="667" width="39" height="1" fill="#b9b9b9"/><rect x="39" y="695" width="1855" height="1" fill="#d4d4d4"/><rect x="0" y="695" width="39" height="1" fill="#b9b9b9"/><rect x="39" y="723" width="1855" height="1" fill="#d4d4d4"/><rect x="0" y="723" width="39" height="1" fill="#b9b9b9"/><rect x="39" y="751" width="1855" height="1" fill="#d4d4d4"/><rect x="0" y="751" width="39" height="1" fill="#b9b9b9"/><rect x="39" y="779" width="1855" height="1" fill="#d4d4d4"/><rect x="0" y="779" width="39" height="1" fill="#b9b9b9"/><rect x="39" y="807" width="1855" height="1" fill="#d4d4d4"/><rect x="0" y="807" width="39" height="1" fill="#b9b9b9"/><rect x="39" y="835" width="1855" height="1" fill="#d4d4d4"/><rect x="0" y="835" width="39" height="1" fill="#b9b9b9"/><rect x="39" y="863" width="1855" height="1" fill="#d4d4d4"/><rect x="0" y="863" width="39" height="1" fill="#b9b9b9"/><rect x="39" y="891" width="1855" height="1" fill="#d4d4d4"/><rect x="0" y="891" width="39" height="1" fill="#b9b9b9"/><rect x="39" y="919" width="1855" height="1" fill="#d4d4d4"/><rect x="0" y="919" width="39" height="1" fill="#b9b9b9"/><rect x="39" y="947" width="1855" height="1" fill="#d4d4d4"/><rect x="0" y="947" width="39" height="1" fill="#b9b9b9"/><rect x="157" y="276" width="1" height="697" fill="#d4d4d4"/><rect x="157" y="250" width="1" height="25" fill="#b9b9b9"/><rect x="240" y="276" width="1" height="697" fill="#d4d4d4"/><rect x="240" y="250" width="1" height="25" fill="#b9b9b9"/><rect x="521" y="276" width="1" height="697" fill="#d4d4d4"/><rect x="521" y="250" width="1" height="25" fill="#b9b9b9"/><rect x="620" y="276" width="1" height="697" fill="#d4d4d4"/><rect x="620" y="250" width="1" height="25" fill="#b9b9b9"/><rect x="733" y="276" width="1" height="697" fill="#d4d4d4"/><rect x="733" y="250" width="1" height="25" fill="#b9b9b9"/><rect x="822" y="276" width="1" height="697" fill="#d4d4d4"/><rect x="822" y="250" width="1" height="25" fill="#b9b9b9"/><rect x="900" y="276" width="1" height="697" fill="#d4d4d4"/><rect x="900" y="250" width="1" height="25" fill="#b9b9b9"/><rect x="1010" y="276" width="1" height="697" fill="#d4d4d4"/><rect x="1010" y="250" width="1" height="25" fill="#b9b9b9"/><rect x="1102" y="276" width="1" height="697" fill="#d4d4d4"/><rect x="1102" y="250" width="1" height="25" fill="#b9b9b9"/><rect x="1194" y="276" width="1" height="697" fill="#d4d4d4"/><rect x="1194" y="250" width="1" height="25" fill="#b9b9b9"/><rect x="1286" y="276" width="1" height="697" fill="#d4d4d4"/><rect x="1286" y="250" width="1" height="25" fill="#b9b9b9"/><rect x="1378" y="276" width="1" height="697" fill="#d4d4d4"/><rect x="1378" y="250" width="1" height="25" fill="#b9b9b9"/><rect x="1470" y="276" width="1" height="697" fill="#d4d4d4"/><rect x="1470" y="250" width="1" height="25" fill="#b9b9b9"/><rect x="1562" y="276" width="1" height="697" fill="#d4d4d4"/><rect x="1562" y="250" width="1" height="25" fill="#b9b9b9"/><rect x="1654" y="276" width="1" height="697" fill="#d4d4d4"/><rect x="1654" y="250" width="1" height="25" fill="#b9b9b9"/><rect x="1746" y="276" width="1" height="697" fill="#d4d4d4"/><rect x="1746" y="250" width="1" height="25" fill="#b9b9b9"/><rect x="1838" y="276" width="1" height="697" fill="#d4d4d4"/><rect x="1838" y="250" width="1" height="25" fill="#b9b9b9"/><rect x="0" y="275" width="1894" height="1" fill="#9b9b9b"/><rect x="39" y="248" width="1" height="725" fill="#9b9b9b"/></svg><div class="t" style="left:-101.0px;width:400px;text-align:center;top:253.3px;font-size:18.5px;color:#217346;font-weight:400;">A</div><div class="t" style="left:-0.5px;width:400px;text-align:center;top:253.3px;font-size:18.5px;color:#262626;font-weight:400;">B</div><div class="t" style="left:181.5px;width:400px;text-align:center;top:253.3px;font-size:18.5px;color:#262626;font-weight:400;">C</div><div class="t" style="left:371.5px;width:400px;text-align:center;top:253.3px;font-size:18.5px;color:#262626;font-weight:400;">D</div><div class="t" style="left:477.5px;width:400px;text-align:center;top:253.3px;font-size:18.5px;color:#262626;font-weight:400;">E</div><div class="t" style="left:578.5px;width:400px;text-align:center;top:253.3px;font-size:18.5px;color:#262626;font-weight:400;">F</div><div class="t" style="left:662.0px;width:400px;text-align:center;top:253.3px;font-size:18.5px;color:#262626;font-weight:400;">G</div><div class="t" style="left:756.0px;width:400px;text-align:center;top:253.3px;font-size:18.5px;color:#262626;font-weight:400;">H</div><div class="t" style="left:857.0px;width:400px;text-align:center;top:253.3px;font-size:18.5px;color:#262626;font-weight:400;">I</div><div class="t" style="left:949.0px;width:400px;text-align:center;top:253.3px;font-size:18.5px;color:#262626;font-weight:400;">J</div><div class="t" style="left:1041.0px;width:400px;text-align:center;top:253.3px;font-size:18.5px;color:#262626;font-weight:400;">K</div><div class="t" style="left:1133.0px;width:400px;text-align:center;top:253.3px;font-size:18.5px;color:#262626;font-weight:400;">L</div><div class="t" style="left:1225.0px;width:400px;text-align:center;top:253.3px;font-size:18.5px;color:#262626;font-weight:400;">M</div><div class="t" style="left:1317.0px;width:400px;text-align:center;top:253.3px;font-size:18.5px;color:#262626;font-weight:400;">N</div><div class="t" style="left:1409.0px;width:400px;text-align:center;top:253.3px;font-size:18.5px;color:#262626;font-weight:400;">O</div><div class="t" style="left:1501.0px;width:400px;text-align:center;top:253.3px;font-size:18.5px;color:#262626;font-weight:400;">P</div><div class="t" style="left:1593.0px;width:400px;text-align:center;top:253.3px;font-size:18.5px;color:#262626;font-weight:400;">Q</div><div class="t" style="left:1876px;top:253.3px;font-size:18.5px;color:#262626;font-weight:400;">R</div><div class="t" style="left:-180px;width:400px;text-align:center;top:281.8px;font-size:18.5px;color:#217346;font-weight:400;">1</div><div class="t" style="left:-180px;width:400px;text-align:center;top:309.8px;font-size:18.5px;color:#262626;font-weight:400;">2</div><div class="t" style="left:-180px;width:400px;text-align:center;top:337.8px;font-size:18.5px;color:#262626;font-weight:400;">3</div><div class="t" style="left:-180px;width:400px;text-align:center;top:365.8px;font-size:18.5px;color:#262626;font-weight:400;">4</div><div class="t" style="left:-180px;width:400px;text-align:center;top:393.8px;font-size:18.5px;color:#262626;font-weight:400;">5</div><div class="t" style="left:-180px;width:400px;text-align:center;top:421.8px;font-size:18.5px;color:#262626;font-weight:400;">6</div><div class="t" style="left:-180px;width:400px;text-align:center;top:449.8px;font-size:18.5px;color:#262626;font-weight:400;">7</div><div class="t" style="left:-180px;width:400px;text-align:center;top:477.8px;font-size:18.5px;color:#262626;font-weight:400;">8</div><div class="t" style="left:-180px;width:400px;text-align:center;top:505.8px;font-size:18.5px;color:#262626;font-weight:400;">9</div><div class="t" style="left:-180px;width:400px;text-align:center;top:533.8px;font-size:18.5px;color:#262626;font-weight:400;">10</div><div class="t" style="left:-180px;width:400px;text-align:center;top:561.8px;font-size:18.5px;color:#262626;font-weight:400;">11</div><div class="t" style="left:-180px;width:400px;text-align:center;top:589.8px;font-size:18.5px;color:#262626;font-weight:400;">12</div><div class="t" style="left:-180px;width:400px;text-align:center;top:617.8px;font-size:18.5px;color:#262626;font-weight:400;">13</div><div class="t" style="left:-180px;width:400px;text-align:center;top:645.8px;font-size:18.5px;color:#262626;font-weight:400;">14</div><div class="t" style="left:-180px;width:400px;text-align:center;top:673.8px;font-size:18.5px;color:#262626;font-weight:400;">15</div><div class="t" style="left:-180px;width:400px;text-align:center;top:701.8px;font-size:18.5px;color:#262626;font-weight:400;">16</div><div class="t" style="left:-180px;width:400px;text-align:center;top:729.8px;font-size:18.5px;color:#262626;font-weight:400;">17</div><div class="t" style="left:-180px;width:400px;text-align:center;top:757.8px;font-size:18.5px;color:#262626;font-weight:400;">18</div><div class="t" style="left:-180px;width:400px;text-align:center;top:785.8px;font-size:18.5px;color:#262626;font-weight:400;">19</div><div class="t" style="left:-180px;width:400px;text-align:center;top:813.8px;font-size:18.5px;color:#262626;font-weight:400;">20</div><div class="t" style="left:-180px;width:400px;text-align:center;top:841.8px;font-size:18.5px;color:#262626;font-weight:400;">21</div><div class="t" style="left:-180px;width:400px;text-align:center;top:869.8px;font-size:18.5px;color:#262626;font-weight:400;">22</div><div class="t" style="left:-180px;width:400px;text-align:center;top:897.8px;font-size:18.5px;color:#262626;font-weight:400;">23</div><div class="t" style="left:-180px;width:400px;text-align:center;top:925.8px;font-size:18.5px;color:#262626;font-weight:400;">24</div><div class="t" style="left:-180px;width:400px;text-align:center;top:953.8px;font-size:18.5px;color:#262626;font-weight:400;">25</div><div class="a" style="left:0;top:0;width:1894px;height:973px;overflow:hidden"><div class="t" style="left:42px;top:287.2px;font-size:12.8px;color:#000;font-weight:700;">First Name</div><div class="t" style="left:160px;top:287.2px;font-size:12.8px;color:#000;font-weight:700;">Last Name</div><div class="t" style="left:243px;top:287.2px;font-size:12.8px;color:#000;font-weight:700;">Email Address</div><div class="t" style="left:524px;top:287.2px;font-size:12.8px;color:#000;font-weight:700;">Mobile</div><div class="t" style="left:623px;top:287.2px;font-size:12.8px;color:#000;font-weight:700;">Status</div><div class="t" style="left:736px;top:287.2px;font-size:12.8px;color:#000;font-weight:700;">Segment</div><div class="t" style="left:825px;top:287.2px;font-size:12.8px;color:#000;font-weight:700;">Product</div><div class="t" style="left:903px;top:287.2px;font-size:12.8px;color:#000;font-weight:700;">Product Group</div><div class="t" style="left:1013px;top:287.2px;font-size:12.8px;color:#000;font-weight:700;">Custom1</div><div class="t" style="left:1105px;top:287.2px;font-size:12.8px;color:#000;font-weight:700;">Custom2</div><div class="t" style="left:1197px;top:287.2px;font-size:12.8px;color:#000;font-weight:700;">Custom3</div><div class="t" style="left:1289px;top:287.2px;font-size:12.8px;color:#000;font-weight:700;">Custom4</div><div class="t" style="left:1381px;top:287.2px;font-size:12.8px;color:#000;font-weight:700;">Custom5</div><div class="t" style="left:1473px;top:287.2px;font-size:12.8px;color:#000;font-weight:700;">Custom6</div><div class="t" style="left:1565px;top:287.2px;font-size:12.8px;color:#000;font-weight:700;">Custom7</div><div class="t" style="left:1657px;top:287.2px;font-size:12.8px;color:#000;font-weight:700;">Custom8</div><div class="t" style="left:1749px;top:287.2px;font-size:12.8px;color:#000;font-weight:700;">Custom9</div><div class="t" style="left:1841px;top:287.2px;font-size:12.8px;color:#000;font-weight:700;">Custom10</div><div class="t" style="left:42px;top:313.6px;font-size:13.5px;color:#000;font-weight:400;letter-spacing:0.272px">Tim</div><div class="t" style="left:160px;top:313.6px;font-size:13.5px;color:#000;font-weight:400;letter-spacing:0.227px">Bailey</div><div class="t" style="left:243px;top:313.6px;font-size:13.5px;color:#000;font-weight:400;letter-spacing:0.243px">tim.baily@gmail.com</div><div class="t" style="left:524px;top:313.6px;font-size:13.5px;color:#000;font-weight:400;letter-spacing:-0.502px">9898989898</div><div class="t" style="left:623px;top:313.6px;font-size:13.5px;color:#000;font-weight:400;letter-spacing:0.257px">Sent</div><div class="t" style="left:736px;top:313.6px;font-size:13.5px;color:#000;font-weight:400;letter-spacing:0.269px">Denver</div><div class="t" style="left:825px;top:313.6px;font-size:13.5px;color:#000;font-weight:400;letter-spacing:-0.215px">iPhone XS</div><div class="t" style="left:903px;top:313.6px;font-size:13.5px;color:#000;font-weight:400;letter-spacing:0.696px">Mobile</div><div class="t" style="left:42px;top:341.6px;font-size:13.5px;color:#000;font-weight:400;letter-spacing:0.256px">Prageethu</div><div class="t" style="left:160px;top:341.6px;font-size:13.5px;color:#000;font-weight:400;letter-spacing:0.310px">Ramdas</div><div class="t" style="left:243px;top:341.6px;font-size:13.5px;color:#000;font-weight:400;letter-spacing:0.258px">prageethu.ramdas@questionpro.com</div><div class="t" style="left:524px;top:341.6px;font-size:13.5px;color:#000;font-weight:400;letter-spacing:-0.502px">8745879494</div><div class="t" style="left:623px;top:341.6px;font-size:13.5px;color:#000;font-weight:400;letter-spacing:0.297px">Opened</div><div class="t" style="left:736px;top:341.6px;font-size:13.5px;color:#000;font-weight:400;letter-spacing:0.211px">California</div><div class="t" style="left:825px;top:341.6px;font-size:13.5px;color:#000;font-weight:400;letter-spacing:-0.215px">iPhone XS</div><div class="t" style="left:903px;top:341.6px;font-size:13.5px;color:#000;font-weight:400;letter-spacing:0.696px">Mobile</div><div class="t" style="left:42px;top:369.6px;font-size:13.5px;color:#000;font-weight:400;letter-spacing:0.282px">Suneesh</div><div class="t" style="left:160px;top:369.6px;font-size:13.5px;color:#000;font-weight:400;letter-spacing:0.239px">jacob</div><div class="t" style="left:243px;top:369.6px;font-size:13.5px;color:#000;font-weight:400;letter-spacing:0.267px">suneeshjacob@gmail.com</div><div class="t" style="left:524px;top:369.6px;font-size:13.5px;color:#000;font-weight:400;letter-spacing:-0.502px">9578569898</div><div class="t" style="left:623px;top:369.6px;font-size:13.5px;color:#000;font-weight:400;letter-spacing:0.297px">Opened</div><div class="t" style="left:736px;top:369.6px;font-size:13.5px;color:#000;font-weight:400;letter-spacing:0.211px">California</div><div class="t" style="left:825px;top:369.6px;font-size:13.5px;color:#000;font-weight:400;letter-spacing:-0.215px">iPhone XS</div><div class="t" style="left:903px;top:369.6px;font-size:13.5px;color:#000;font-weight:400;letter-spacing:0.696px">Mobile</div><div class="t" style="left:42px;top:397.6px;font-size:13.5px;color:#000;font-weight:400;letter-spacing:0.266px">Praveen</div><div class="t" style="left:160px;top:397.6px;font-size:13.5px;color:#000;font-weight:400;letter-spacing:0.278px">huded</div><div class="t" style="left:243px;top:397.6px;font-size:13.5px;color:#000;font-weight:400;letter-spacing:0.238px">praveenhuded3@gmail.com</div><div class="t" style="left:524px;top:397.6px;font-size:13.5px;color:#000;font-weight:400;letter-spacing:-0.502px">6389934090</div><div class="t" style="left:623px;top:397.6px;font-size:13.5px;color:#000;font-weight:400;letter-spacing:0.259px">Email Bounced</div><div class="t" style="left:736px;top:397.6px;font-size:13.5px;color:#000;font-weight:400;letter-spacing:0.211px">California</div><div class="t" style="left:825px;top:397.6px;font-size:13.5px;color:#000;font-weight:400;letter-spacing:-0.215px">iPhone XS</div><div class="t" style="left:903px;top:397.6px;font-size:13.5px;color:#000;font-weight:400;letter-spacing:0.696px">Mobile</div><div class="t" style="left:42px;top:425.6px;font-size:13.5px;color:#000;font-weight:400;letter-spacing:0.265px">Vishnaram</div><div class="t" style="left:160px;top:425.6px;font-size:13.5px;color:#000;font-weight:400;letter-spacing:0.195px">jain</div><div class="t" style="left:243px;top:425.6px;font-size:13.5px;color:#000;font-weight:400;letter-spacing:0.268px">vishnaram@gmail.com</div><div class="t" style="left:524px;top:425.6px;font-size:13.5px;color:#000;font-weight:400;letter-spacing:-0.502px">9787584201</div><div class="t" style="left:623px;top:425.6px;font-size:13.5px;color:#000;font-weight:400;letter-spacing:0.234px">Clicked</div><div class="t" style="left:736px;top:425.6px;font-size:13.5px;color:#000;font-weight:400;letter-spacing:0.211px">California</div><div class="t" style="left:825px;top:425.6px;font-size:13.5px;color:#000;font-weight:400;letter-spacing:-0.215px">iPhone XS</div><div class="t" style="left:903px;top:425.6px;font-size:13.5px;color:#000;font-weight:400;letter-spacing:0.696px">Mobile</div><div class="t" style="left:42px;top:453.6px;font-size:13.5px;color:#000;font-weight:400;letter-spacing:0.296px">Omveer</div><div class="t" style="left:160px;top:453.6px;font-size:13.5px;color:#000;font-weight:400;letter-spacing:0.239px">singh</div><div class="t" style="left:243px;top:453.6px;font-size:13.5px;color:#000;font-weight:400;letter-spacing:0.108px">omveer2012@yahoo.in</div><div class="t" style="left:524px;top:453.6px;font-size:13.5px;color:#000;font-weight:400;letter-spacing:-0.502px">8745948090</div><div class="t" style="left:623px;top:453.6px;font-size:13.5px;color:#000;font-weight:400;letter-spacing:0.255px">Unsubscribed</div><div class="t" style="left:736px;top:453.6px;font-size:13.5px;color:#000;font-weight:400;letter-spacing:0.211px">California</div><div class="t" style="left:825px;top:453.6px;font-size:13.5px;color:#000;font-weight:400;letter-spacing:-0.215px">iPhone XS</div><div class="t" style="left:903px;top:453.6px;font-size:13.5px;color:#000;font-weight:400;letter-spacing:0.696px">Mobile</div><div class="t" style="left:42px;top:481.6px;font-size:13.5px;color:#000;font-weight:400;letter-spacing:0.270px">Bhupalmehra</div><div class="t" style="left:160px;top:481.6px;font-size:13.5px;color:#000;font-weight:400;letter-spacing:0.225px">srivastava</div><div class="t" style="left:243px;top:481.6px;font-size:13.5px;color:#000;font-weight:400;letter-spacing:0.204px">bhupalmehra17@gmail.com</div><div class="t" style="left:524px;top:481.6px;font-size:13.5px;color:#000;font-weight:400;letter-spacing:-0.502px">7985963004</div><div class="t" style="left:623px;top:481.6px;font-size:13.5px;color:#000;font-weight:400;letter-spacing:0.424px">Delivered</div><div class="t" style="left:736px;top:481.6px;font-size:13.5px;color:#000;font-weight:400;letter-spacing:0.211px">California</div><div class="t" style="left:825px;top:481.6px;font-size:13.5px;color:#000;font-weight:400;letter-spacing:-0.215px">iPhone XS</div><div class="t" style="left:903px;top:481.6px;font-size:13.5px;color:#000;font-weight:400;letter-spacing:0.696px">Mobile</div><div class="t" style="left:42px;top:509.6px;font-size:13.5px;color:#000;font-weight:400;letter-spacing:0.283px">Satyam</div><div class="t" style="left:160px;top:509.6px;font-size:13.5px;color:#000;font-weight:400;letter-spacing:0.271px">shah</div><div class="t" style="left:243px;top:509.6px;font-size:13.5px;color:#000;font-weight:400;letter-spacing:0.120px">satyam2708@gmail.com</div><div class="t" style="left:524px;top:509.6px;font-size:13.5px;color:#000;font-weight:400;letter-spacing:-0.502px">9273449794</div><div class="t" style="left:623px;top:509.6px;font-size:13.5px;color:#000;font-weight:400;letter-spacing:0.424px">Delivered</div><div class="t" style="left:736px;top:509.6px;font-size:13.5px;color:#000;font-weight:400;letter-spacing:0.211px">California</div><div class="t" style="left:825px;top:509.6px;font-size:13.5px;color:#000;font-weight:400;letter-spacing:-0.215px">iPhone XS</div><div class="t" style="left:903px;top:509.6px;font-size:13.5px;color:#000;font-weight:400;letter-spacing:0.696px">Mobile</div><div class="t" style="left:42px;top:537.6px;font-size:13.5px;color:#000;font-weight:400;letter-spacing:0.215px">Shrihari</div><div class="t" style="left:160px;top:537.6px;font-size:13.5px;color:#000;font-weight:400;letter-spacing:0.256px">green</div><div class="t" style="left:243px;top:537.6px;font-size:13.5px;color:#000;font-weight:400;letter-spacing:0.139px">shrihari333@gmail.com</div><div class="t" style="left:524px;top:537.6px;font-size:13.5px;color:#000;font-weight:400;letter-spacing:-0.502px">9490958044</div><div class="t" style="left:623px;top:537.6px;font-size:13.5px;color:#000;font-weight:400;letter-spacing:0.424px">Delivered</div><div class="t" style="left:736px;top:537.6px;font-size:13.5px;color:#000;font-weight:400;letter-spacing:0.232px">los Angeles</div><div class="t" style="left:825px;top:537.6px;font-size:13.5px;color:#000;font-weight:400;letter-spacing:-0.215px">iPhone XS</div><div class="t" style="left:903px;top:537.6px;font-size:13.5px;color:#000;font-weight:400;letter-spacing:0.696px">Mobile</div><div class="t" style="left:42px;top:565.6px;font-size:13.5px;color:#000;font-weight:400;letter-spacing:0.259px">Nishug</div><div class="t" style="left:160px;top:565.6px;font-size:13.5px;color:#000;font-weight:400;letter-spacing:0.236px">paul</div><div class="t" style="left:243px;top:565.6px;font-size:13.5px;color:#000;font-weight:400;letter-spacing:0.113px">nishug0786@gmail.com</div><div class="t" style="left:524px;top:565.6px;font-size:13.5px;color:#000;font-weight:400;letter-spacing:-0.502px">8723435756</div><div class="t" style="left:623px;top:565.6px;font-size:13.5px;color:#000;font-weight:400;letter-spacing:0.424px">Delivered</div><div class="t" style="left:736px;top:565.6px;font-size:13.5px;color:#000;font-weight:400;letter-spacing:0.269px">Denver</div><div class="t" style="left:825px;top:565.6px;font-size:13.5px;color:#000;font-weight:400;letter-spacing:-0.215px">iPhone XS</div><div class="t" style="left:903px;top:565.6px;font-size:13.5px;color:#000;font-weight:400;letter-spacing:0.696px">Mobile</div><div class="t" style="left:42px;top:593.6px;font-size:13.5px;color:#000;font-weight:400;letter-spacing:0.236px">Ravikr</div><div class="t" style="left:160px;top:593.6px;font-size:13.5px;color:#000;font-weight:400;letter-spacing:0.239px">singh</div><div class="t" style="left:243px;top:593.6px;font-size:13.5px;color:#000;font-weight:400;letter-spacing:0.180px">ravikr.singh89@gmail.com</div><div class="t" style="left:524px;top:593.6px;font-size:13.5px;color:#000;font-weight:400;letter-spacing:-0.502px">7934739509</div><div class="t" style="left:623px;top:593.6px;font-size:13.5px;color:#000;font-weight:400;letter-spacing:0.424px">Delivered</div><div class="t" style="left:736px;top:593.6px;font-size:13.5px;color:#000;font-weight:400;letter-spacing:0.269px">Denver</div><div class="t" style="left:825px;top:593.6px;font-size:13.5px;color:#000;font-weight:400;letter-spacing:-0.215px">iPhone XS</div><div class="t" style="left:903px;top:593.6px;font-size:13.5px;color:#000;font-weight:400;letter-spacing:0.696px">Mobile</div><div class="t" style="left:42px;top:621.6px;font-size:13.5px;color:#000;font-weight:400;letter-spacing:0.261px">Lucky</div><div class="t" style="left:160px;top:621.6px;font-size:13.5px;color:#000;font-weight:400;letter-spacing:0.239px">singh</div><div class="t" style="left:243px;top:621.6px;font-size:13.5px;color:#000;font-weight:400;letter-spacing:0.120px">lucky_singh99989@rediffmail.com</div><div class="t" style="left:524px;top:621.6px;font-size:13.5px;color:#000;font-weight:400;letter-spacing:-0.502px">6867434898</div><div class="t" style="left:623px;top:621.6px;font-size:13.5px;color:#000;font-weight:400;letter-spacing:0.424px">Delivered</div><div class="t" style="left:736px;top:621.6px;font-size:13.5px;color:#000;font-weight:400;letter-spacing:0.269px">Denver</div><div class="t" style="left:825px;top:621.6px;font-size:13.5px;color:#000;font-weight:400;letter-spacing:-0.215px">iPhone XS</div><div class="t" style="left:903px;top:621.6px;font-size:13.5px;color:#000;font-weight:400;letter-spacing:0.696px">Mobile</div><div class="t" style="left:42px;top:649.6px;font-size:13.5px;color:#000;font-weight:400;letter-spacing:0.139px">Jijil</div><div class="t" style="left:160px;top:649.6px;font-size:13.5px;color:#000;font-weight:400;letter-spacing:0.178px">tilak</div><div class="t" style="left:243px;top:649.6px;font-size:13.5px;color:#000;font-weight:400;letter-spacing:0.215px">jijil.tk@gmail.com</div><div class="t" style="left:524px;top:649.6px;font-size:13.5px;color:#000;font-weight:400;letter-spacing:-0.502px">9273473949</div><div class="t" style="left:623px;top:649.6px;font-size:13.5px;color:#000;font-weight:400;letter-spacing:0.424px">Delivered</div><div class="t" style="left:736px;top:649.6px;font-size:13.5px;color:#000;font-weight:400;letter-spacing:0.269px">Denver</div><div class="t" style="left:825px;top:649.6px;font-size:13.5px;color:#000;font-weight:400;letter-spacing:-0.215px">iPhone XS</div><div class="t" style="left:903px;top:649.6px;font-size:13.5px;color:#000;font-weight:400;letter-spacing:0.696px">Mobile</div><div class="t" style="left:42px;top:677.6px;font-size:13.5px;color:#000;font-weight:400;letter-spacing:0.275px">Ramnathredd</div><div class="t" style="left:160px;top:677.6px;font-size:13.5px;color:#000;font-weight:400;letter-spacing:0.217px">pathi</div><div class="t" style="left:243px;top:677.6px;font-size:13.5px;color:#000;font-weight:400;letter-spacing:0.252px">ramnathreddy.pathi@gmail.com</div><div class="t" style="left:524px;top:677.6px;font-size:13.5px;color:#000;font-weight:400;letter-spacing:-0.502px">8876847633</div><div class="t" style="left:623px;top:677.6px;font-size:13.5px;color:#000;font-weight:400;letter-spacing:0.424px">Delivered</div><div class="t" style="left:736px;top:677.6px;font-size:13.5px;color:#000;font-weight:400;letter-spacing:0.211px">California</div><div class="t" style="left:825px;top:677.6px;font-size:13.5px;color:#000;font-weight:400;letter-spacing:-0.215px">iPhone XS</div><div class="t" style="left:903px;top:677.6px;font-size:13.5px;color:#000;font-weight:400;letter-spacing:0.696px">Mobile</div><div class="t" style="left:42px;top:705.6px;font-size:13.5px;color:#000;font-weight:400;letter-spacing:0.243px">Masoodvali.</div><div class="t" style="left:243px;top:705.6px;font-size:13.5px;color:#000;font-weight:400;letter-spacing:0.259px">masoodvali.k@gmail.com</div><div class="t" style="left:524px;top:705.6px;font-size:13.5px;color:#000;font-weight:400;letter-spacing:-0.502px">9246348658</div><div class="t" style="left:623px;top:705.6px;font-size:13.5px;color:#000;font-weight:400;letter-spacing:0.424px">Delivered</div><div class="t" style="left:736px;top:705.6px;font-size:13.5px;color:#000;font-weight:400;letter-spacing:0.398px">Austin</div><div class="t" style="left:825px;top:705.6px;font-size:13.5px;color:#000;font-weight:400;letter-spacing:-0.215px">iPhone XS</div><div class="t" style="left:903px;top:705.6px;font-size:13.5px;color:#000;font-weight:400;letter-spacing:0.696px">Mobile</div><div class="t" style="left:42px;top:733.6px;font-size:13.5px;color:#000;font-weight:400;letter-spacing:0.282px">Himansu</div><div class="t" style="left:160px;top:733.6px;font-size:13.5px;color:#000;font-weight:400;letter-spacing:0.271px">himanshu</div><div class="t" style="left:243px;top:733.6px;font-size:13.5px;color:#000;font-weight:400;letter-spacing:0.167px">himansu1234himanshu@gmail.com</div><div class="t" style="left:524px;top:733.6px;font-size:13.5px;color:#000;font-weight:400;letter-spacing:-0.502px">6847948504</div><div class="t" style="left:623px;top:733.6px;font-size:13.5px;color:#000;font-weight:400;letter-spacing:0.257px">Sent</div><div class="t" style="left:736px;top:733.6px;font-size:13.5px;color:#000;font-weight:400;letter-spacing:0.398px">Austin</div><div class="t" style="left:825px;top:733.6px;font-size:13.5px;color:#000;font-weight:400;letter-spacing:-0.215px">iPhone XS</div><div class="t" style="left:903px;top:733.6px;font-size:13.5px;color:#000;font-weight:400;letter-spacing:0.696px">Mobile</div><div class="t" style="left:42px;top:761.6px;font-size:13.5px;color:#000;font-weight:400;letter-spacing:0.297px">Rsh</div><div class="t" style="left:160px;top:761.6px;font-size:13.5px;color:#000;font-weight:400;letter-spacing:0.232px">thakur</div><div class="t" style="left:243px;top:761.6px;font-size:13.5px;color:#000;font-weight:400;letter-spacing:0.184px">rshthakur80@gmail.com</div><div class="t" style="left:524px;top:761.6px;font-size:13.5px;color:#000;font-weight:400;letter-spacing:-0.502px">7274648769</div><div class="t" style="left:623px;top:761.6px;font-size:13.5px;color:#000;font-weight:400;letter-spacing:0.257px">Sent</div><div class="t" style="left:736px;top:761.6px;font-size:13.5px;color:#000;font-weight:400;letter-spacing:0.398px">Austin</div><div class="t" style="left:825px;top:761.6px;font-size:13.5px;color:#000;font-weight:400;letter-spacing:-0.215px">iPhone XS</div><div class="t" style="left:903px;top:761.6px;font-size:13.5px;color:#000;font-weight:400;letter-spacing:0.696px">Mobile</div><div class="t" style="left:42px;top:789.6px;font-size:13.5px;color:#000;font-weight:400;letter-spacing:0.236px">Vt</div><div class="t" style="left:243px;top:789.6px;font-size:13.5px;color:#000;font-weight:400;letter-spacing:0.073px">vt1469@gmail.com</div><div class="t" style="left:524px;top:789.6px;font-size:13.5px;color:#000;font-weight:400;letter-spacing:-0.502px">8937493899</div><div class="t" style="left:623px;top:789.6px;font-size:13.5px;color:#000;font-weight:400;letter-spacing:0.218px">clicked</div><div class="t" style="left:736px;top:789.6px;font-size:13.5px;color:#000;font-weight:400;letter-spacing:0.232px">los Angeles</div><div class="t" style="left:825px;top:789.6px;font-size:13.5px;color:#000;font-weight:400;letter-spacing:-0.215px">iPhone XS</div><div class="t" style="left:903px;top:789.6px;font-size:13.5px;color:#000;font-weight:400;letter-spacing:0.696px">Mobile</div><div class="t" style="left:42px;top:817.6px;font-size:13.5px;color:#000;font-weight:400;letter-spacing:0.288px">Gautamkumar</div><div class="t" style="left:160px;top:817.6px;font-size:13.5px;color:#000;font-weight:400;letter-spacing:0.239px">singh</div><div class="t" style="left:243px;top:817.6px;font-size:13.5px;color:#000;font-weight:400;letter-spacing:0.167px">gautamkumarsingh.1993@gmail.com</div><div class="t" style="left:524px;top:817.6px;font-size:13.5px;color:#000;font-weight:400;letter-spacing:-0.502px">9762384645</div><div class="t" style="left:623px;top:817.6px;font-size:13.5px;color:#000;font-weight:400;letter-spacing:0.218px">clicked</div><div class="t" style="left:736px;top:817.6px;font-size:13.5px;color:#000;font-weight:400;letter-spacing:0.232px">los Angeles</div><div class="t" style="left:825px;top:817.6px;font-size:13.5px;color:#000;font-weight:400;letter-spacing:-0.215px">iPhone XS</div><div class="t" style="left:903px;top:817.6px;font-size:13.5px;color:#000;font-weight:400;letter-spacing:0.696px">Mobile</div><div class="t" style="left:42px;top:845.6px;font-size:13.5px;color:#000;font-weight:400;letter-spacing:0.221px">Vipin</div><div class="t" style="left:160px;top:845.6px;font-size:13.5px;color:#000;font-weight:400;letter-spacing:0.209px">rajput</div><div class="t" style="left:243px;top:845.6px;font-size:13.5px;color:#000;font-weight:400;letter-spacing:0.148px">vipinrajput919@gmail.com</div><div class="t" style="left:524px;top:845.6px;font-size:13.5px;color:#000;font-weight:400;letter-spacing:-0.502px">6198374979</div><div class="t" style="left:623px;top:845.6px;font-size:13.5px;color:#000;font-weight:400;letter-spacing:0.218px">clicked</div><div class="t" style="left:736px;top:845.6px;font-size:13.5px;color:#000;font-weight:400;letter-spacing:0.232px">los Angeles</div><div class="t" style="left:825px;top:845.6px;font-size:13.5px;color:#000;font-weight:400;letter-spacing:-0.215px">iPhone XS</div><div class="t" style="left:903px;top:845.6px;font-size:13.5px;color:#000;font-weight:400;letter-spacing:0.696px">Mobile</div><div class="t" style="left:42px;top:873.6px;font-size:13.5px;color:#000;font-weight:400;letter-spacing:0.269px">Manish</div><div class="t" style="left:160px;top:873.6px;font-size:13.5px;color:#000;font-weight:400;letter-spacing:0.247px">khusrupur</div><div class="t" style="left:243px;top:873.6px;font-size:13.5px;color:#000;font-weight:400;letter-spacing:0.260px">manish.khusrupur@gmail.com</div><div class="t" style="left:524px;top:873.6px;font-size:13.5px;color:#000;font-weight:400;letter-spacing:-0.502px">8465946493</div><div class="t" style="left:623px;top:873.6px;font-size:13.5px;color:#000;font-weight:400;letter-spacing:0.218px">clicked</div><div class="t" style="left:736px;top:873.6px;font-size:13.5px;color:#000;font-weight:400;letter-spacing:0.232px">los Angeles</div><div class="t" style="left:825px;top:873.6px;font-size:13.5px;color:#000;font-weight:400;letter-spacing:-0.215px">iPhone XS</div><div class="t" style="left:903px;top:873.6px;font-size:13.5px;color:#000;font-weight:400;letter-spacing:0.696px">Mobile</div><div class="t" style="left:42px;top:901.6px;font-size:13.5px;color:#000;font-weight:400;letter-spacing:0.261px">Rahul</div><div class="t" style="left:160px;top:901.6px;font-size:13.5px;color:#000;font-weight:400;letter-spacing:0.250px">mishra</div><div class="t" style="left:243px;top:901.6px;font-size:13.5px;color:#000;font-weight:400;letter-spacing:0.136px">rahulmishra5790@gmail.com</div><div class="t" style="left:524px;top:901.6px;font-size:13.5px;color:#000;font-weight:400;letter-spacing:-0.502px">7283748746</div><div class="t" style="left:623px;top:901.6px;font-size:13.5px;color:#000;font-weight:400;letter-spacing:0.424px">Delivered</div><div class="t" style="left:736px;top:901.6px;font-size:13.5px;color:#000;font-weight:400;letter-spacing:0.232px">los Angeles</div><div class="t" style="left:825px;top:901.6px;font-size:13.5px;color:#000;font-weight:400;letter-spacing:-0.215px">iPhone XS</div><div class="t" style="left:903px;top:901.6px;font-size:13.5px;color:#000;font-weight:400;letter-spacing:0.696px">Mobile</div><div class="t" style="left:42px;top:929.6px;font-size:13.5px;color:#000;font-weight:400;letter-spacing:0.306px">Munna</div><div class="t" style="left:160px;top:929.6px;font-size:13.5px;color:#000;font-weight:400;letter-spacing:0.278px">kumar</div><div class="t" style="left:243px;top:929.6px;font-size:13.5px;color:#000;font-weight:400;letter-spacing:0.160px">munnakumar_1991@rediffmail.com</div><div class="t" style="left:524px;top:929.6px;font-size:13.5px;color:#000;font-weight:400;letter-spacing:-0.502px">9374983493</div><div class="t" style="left:623px;top:929.6px;font-size:13.5px;color:#000;font-weight:400;letter-spacing:0.424px">Delivered</div><div class="t" style="left:736px;top:929.6px;font-size:13.5px;color:#000;font-weight:400;letter-spacing:0.232px">los Angeles</div><div class="t" style="left:825px;top:929.6px;font-size:13.5px;color:#000;font-weight:400;letter-spacing:-0.215px">iPhone XS</div><div class="t" style="left:903px;top:929.6px;font-size:13.5px;color:#000;font-weight:400;letter-spacing:0.696px">Mobile</div><div class="t" style="left:42px;top:957.6px;font-size:13.5px;color:#000;font-weight:400;letter-spacing:0.287px">Kundan</div><div class="t" style="left:160px;top:957.6px;font-size:13.5px;color:#000;font-weight:400;letter-spacing:0.250px">gupta</div><div class="t" style="left:243px;top:957.6px;font-size:13.5px;color:#000;font-weight:400;letter-spacing:0.243px">kundankumargupta1@gmail.com</div><div class="t" style="left:524px;top:957.6px;font-size:13.5px;color:#000;font-weight:400;letter-spacing:-0.502px">8984759759</div><div class="t" style="left:623px;top:957.6px;font-size:13.5px;color:#000;font-weight:400;letter-spacing:0.424px">Delivered</div><div class="t" style="left:736px;top:957.6px;font-size:13.5px;color:#000;font-weight:400;letter-spacing:0.269px">Denver</div><div class="t" style="left:825px;top:957.6px;font-size:13.5px;color:#000;font-weight:400;letter-spacing:-0.215px">iPhone XS</div><div class="t" style="left:903px;top:957.6px;font-size:13.5px;color:#000;font-weight:400;letter-spacing:0.696px">Mobile</div></div><svg class="a" style="left:522px;top:304px;" width="7" height="7" viewBox="0 0 7 7"><path d="M0 0H7L0 7Z" fill="#1b8a2c"/></svg><div class="a" style="left:38px;top:274px;width:121px;height:31px;border:2px solid #217346;box-sizing:border-box"></div><div class="a" style="left:155px;top:301px;width:5px;height:5px;background:#217346;border:1px solid #fff;box-sizing:content-box"></div><div class="a" style="left:1894px;top:275px;width:1px;height:698px;background:#9b9b9b"></div><div class="a" style="left:1895px;top:248px;width:21px;height:725px;background:#e6e6e6"></div><div class="a" style="left:1898px;top:268px;width:18px;height:705px;background:#dadada"></div><div class="a" style="left:1898px;top:250px;width:18px;height:18px;background:#fff;border:1px solid #c8c8c8;border-right:0;box-sizing:border-box"></div><svg class="a" style="left:1903px;top:257px;" width="9" height="5" viewBox="0 0 9 5"><path d="M0 5L4.5 0L9 5Z" fill="#777"/></svg><div class="a" style="left:1898px;top:268px;width:18px;height:412px;background:#fff;border:1px solid #a0a0a0;border-right:0;box-sizing:border-box"></div><div class="a" style="left:1898px;top:954px;width:18px;height:18px;background:#fff;border:1px solid #c8c8c8;border-right:0;box-sizing:border-box"></div><svg class="a" style="left:1903px;top:961px;" width="9" height="5" viewBox="0 0 9 5"><path d="M0 0H9L4.5 5Z" fill="#777"/></svg><div class="a" style="left:0px;top:973px;width:1916px;height:27px;background:#e6e6e6"></div><div class="a" style="left:0px;top:973px;width:1916px;height:1px;background:#c6c6c6"></div><div class="a" style="left:0px;top:1000px;width:1916px;height:4px;background:#fff"></div><svg class="a" style="left:28px;top:983px;" width="5" height="9" viewBox="0 0 5 9"><path d="M5 0V9L0 4.5Z" fill="#c0c0c0"/></svg><svg class="a" style="left:57px;top:983px;" width="5" height="9" viewBox="0 0 5 9"><path d="M0 0V9L5 4.5Z" fill="#c0c0c0"/></svg><div class="a" style="left:103px;top:977px;width:1px;height:20px;background:#999"></div><div class="t" style="left:117px;top:976.8px;font-size:16.8px;color:#444;font-weight:400;">Summary</div><div class="a" style="left:204px;top:973px;width:216px;height:26px;background:#fff;border-left:1px solid #bbb;border-right:1px solid #bbb;box-sizing:border-box"></div><div class="a" style="left:204px;top:996px;width:216px;height:3px;background:#217346"></div><div class="t" style="left:216px;top:976.9px;font-size:16.6px;color:#217346;font-weight:700;">Email Delivery Statistics</div><svg class="a" style="left:453px;top:977px;" width="20" height="20" viewBox="0 0 20 20"><circle cx="10" cy="10" r="9" fill="none" stroke="#777" stroke-width="1.3"/><path d="M10 5V15M5 10H15" stroke="#777" stroke-width="1.5"/></svg><div class="a" style="left:1150px;top:979px;width:3px;height:3px;background:#999"></div><div class="a" style="left:1150px;top:985px;width:3px;height:3px;background:#999"></div><div class="a" style="left:1150px;top:991px;width:3px;height:3px;background:#999"></div><div class="a" style="left:1166px;top:977px;width:730px;height:19px;background:#dcdcdc"></div><div class="a" style="left:1166px;top:977px;width:19px;height:19px;background:#fff;border:1px solid #ccc;box-sizing:border-box"></div><svg class="a" style="left:1172px;top:982px;" width="5" height="9" viewBox="0 0 5 9"><path d="M5 0V9L0 4.5Z" fill="#555"/></svg><div class="a" style="left:1185px;top:977px;width:493px;height:19px;background:#fff;border:1px solid #bbb;box-sizing:border-box"></div><div class="a" style="left:1876px;top:977px;width:19px;height:19px;background:#fff;border:1px solid #ccc;box-sizing:border-box"></div><svg class="a" style="left:1883px;top:982px;" width="5" height="9" viewBox="0 0 5 9"><path d="M0 0V9L5 4.5Z" fill="#555"/></svg></body></html>
